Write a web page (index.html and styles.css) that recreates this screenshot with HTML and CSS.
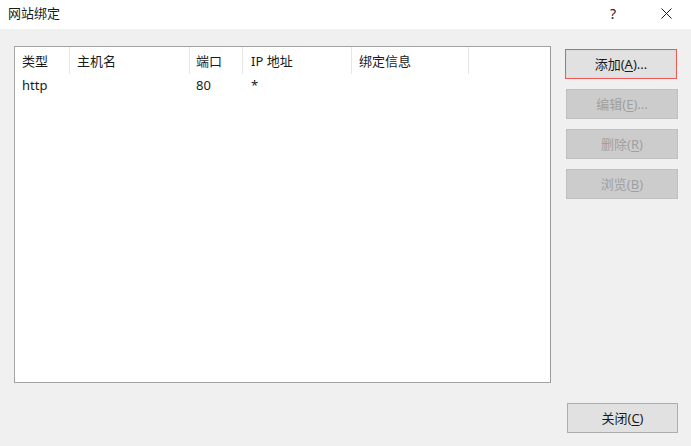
FILE: index.html
```html
<!DOCTYPE html>
<html lang="zh-CN">
<head>
<meta charset="utf-8">
<title>网站绑定</title>
<link rel="stylesheet" href="styles.css">
</head>
<body>
<div class="dialog">
  <div class="titlebar">
    <span class="title">网站绑定</span>
    <span class="help">?</span>
    <span class="close">
      <svg width="11" height="11" viewBox="0 0 11 11"><path d="M0.5 0.5 L10.5 10.5 M10.5 0.5 L0.5 10.5" stroke="#1a1a1a" stroke-width="1" fill="none"/></svg>
    </span>
  </div>
  <div class="content">
    <div class="listview">
      <div class="header">
        <div class="col c1">类型</div>
        <div class="col c2">主机名</div>
        <div class="col c3">端口</div>
        <div class="col c4">IP 地址</div>
        <div class="col c5">绑定信息</div>
      </div>
      <div class="row">
        <div class="cell c1">http</div>
        <div class="cell c2"></div>
        <div class="cell c3">80</div>
        <div class="cell c4">*</div>
        <div class="cell c5"></div>
      </div>
    </div>
    <div class="buttons">
      <button class="btn focused">添加(<u>A</u>)...</button>
      <button class="btn disabled">编辑(<u>E</u>)...</button>
      <button class="btn disabled">删除(<u>R</u>)</button>
      <button class="btn disabled">浏览(<u>B</u>)</button>
      <button class="btn closebtn">关闭(<u>C</u>)</button>
    </div>
  </div>
</div>
</body>
</html>
```

FILE: styles.css
```css
* { box-sizing: border-box; }
html, body {
  margin: 0;
  padding: 0;
  width: 691px;
  height: 446px;
  overflow: hidden;
  background: #f0f0f0;
  font-family: "Noto Sans", "Noto Sans CJK SC", sans-serif;
  font-size: 13px;
  color: #1a1a1a;
}
.dialog {
  width: 691px;
  height: 446px;
  display: flex;
  flex-direction: column;
}
.titlebar {
  height: 29px;
  background: #ffffff;
  display: flex;
  align-items: center;
  padding-left: 8px;
}
.title {
  flex: 1;
  font-size: 13px;
  line-height: 16px;
  margin-top: -3px;
}
.help {
  width: 20px;
  font-size: 14px;
  margin-right: 31px;
  margin-top: -3px;
  text-align: left;
}
.close {
  width: 11px;
  height: 11px;
  margin-right: 19px;
  margin-top: -3px;
  display: flex;
}
.content {
  flex: 1;
  display: flex;
  padding: 17px 0 0 14px;
}
.listview {
  width: 537px;
  height: 337px;
  background: #ffffff;
  border: 1px solid #a3a3a3;
  border-right-color: #9a9a9a;
}
.header, .row {
  display: flex;
}
.header {
  height: 27px;
  align-items: stretch;
}
.col {
  border-right: 1px solid #e6e6e6;
  padding-left: 7px;
  padding-top: 1px;
  line-height: 26px;
}
.row {
  height: 22px;
  margin-top: 0;
}
.cell {
  padding-left: 7px;
  line-height: 22px;
}
.c1 { width: 55px; }
.c2 { width: 120px; }
.c3 { width: 53px; padding-left: 6px; }
.c4 { width: 109px; padding-left: 8px; }
.c5 { width: 117px; padding-left: 7px; }
.buttons {
  margin-left: 14px;
  padding-top: 3px;
  padding-bottom: 13px;
  display: flex;
  flex-direction: column;
  width: 113px;
}
.btn {
  font-family: "Noto Sans", "Noto Sans CJK SC", sans-serif;
  font-size: 13px;
  height: 30px;
  width: 112px;
  margin: 0 0 10px 1px;
  background: #e1e1e1;
  border: 1px solid #adadad;
  color: #1a1a1a;
  padding: 0;
  line-height: 26px;
}
.btn u { text-decoration: underline; text-underline-offset: 2px; }
.btn.focused {
  border-color: #ec5a5a;
  margin-left: 0;
  box-shadow: inset 0 0 0 1px #dcdcdc;
}
.btn.disabled {
  background: #cccccc;
  border-color: #bfbfbf;
  color: #a0a0a0;
  margin-bottom: 10px;
}
.closebtn {
  margin-top: auto;
  margin-bottom: 0;
  margin-left: 2px;
  width: 111px;
}
```
